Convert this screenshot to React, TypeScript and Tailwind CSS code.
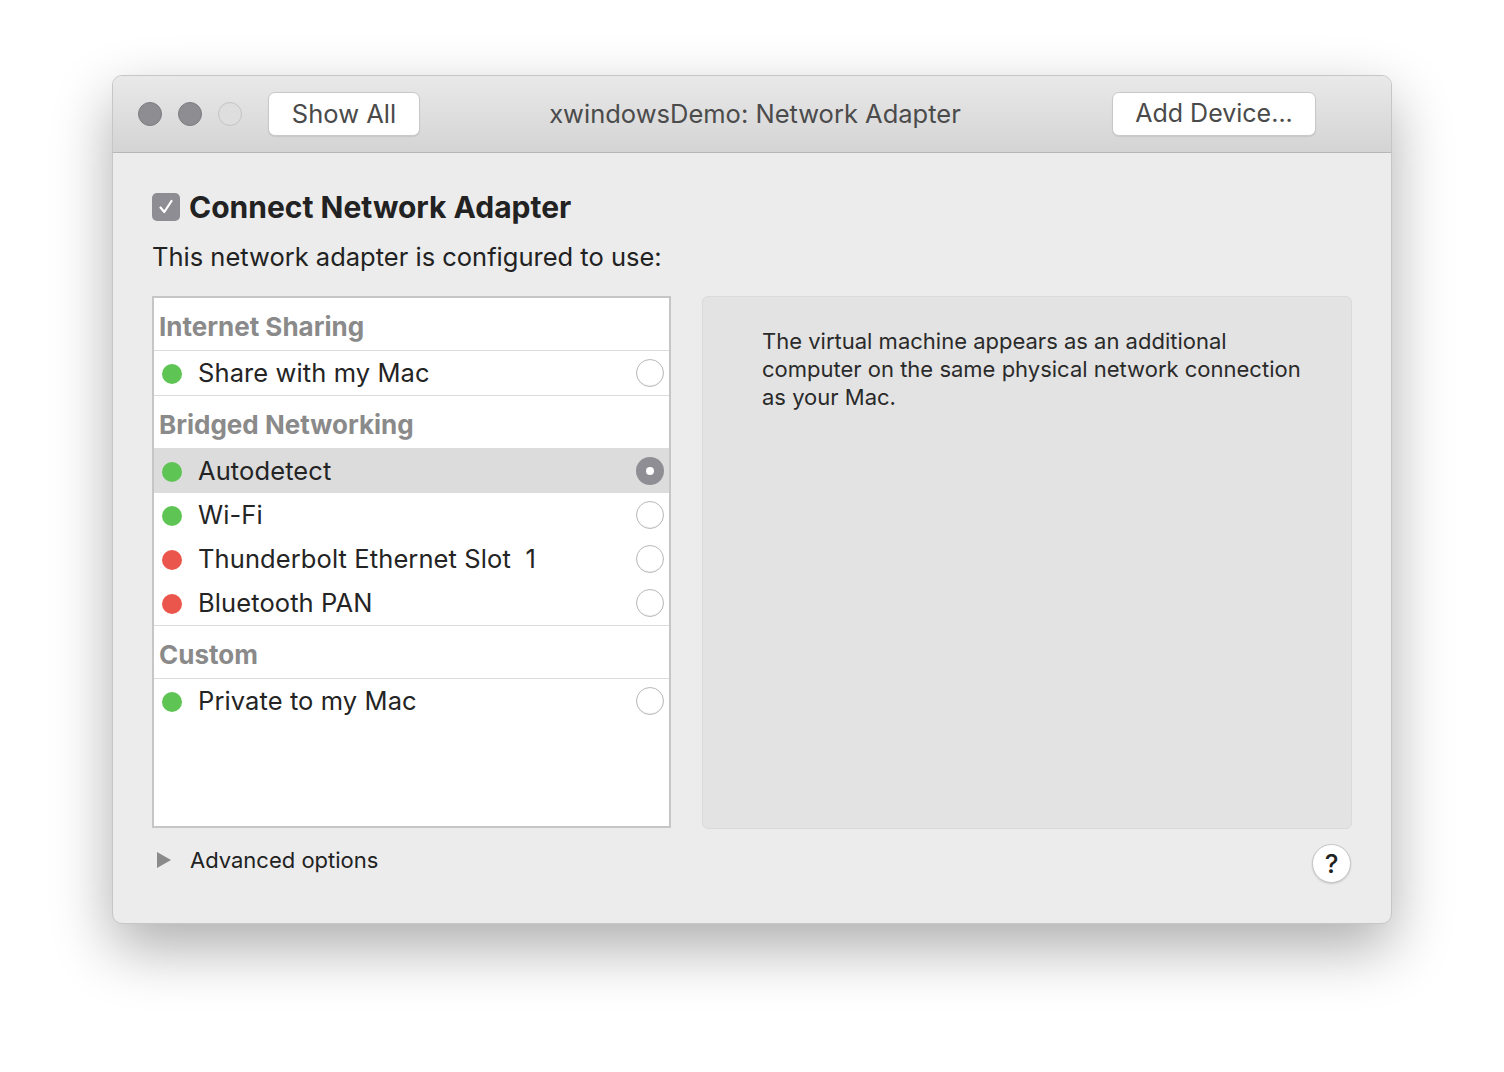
import React from 'react';

type Row = { label: string; status: 'on' | 'off'; selected?: boolean };
type Section = { title: string; rows: Row[] };

const sections: Section[] = [
  { title: 'Internet Sharing', rows: [{ label: 'Share with my Mac', status: 'on' }] },
  {
    title: 'Bridged Networking',
    rows: [
      { label: 'Autodetect', status: 'on', selected: true },
      { label: 'Wi-Fi', status: 'on' },
      { label: 'Thunderbolt Ethernet Slot\u00a0 1', status: 'off' },
      { label: 'Bluetooth PAN', status: 'off' },
    ],
  },
  { title: 'Custom', rows: [{ label: 'Private to my Mac', status: 'on' }] },
];

const Radio: React.FC<{ checked?: boolean }> = ({ checked }) =>
  checked ? (
    <div className="w-[28px] h-[28px] rounded-full bg-[#8f8e94] flex items-center justify-center">
      <div className="w-[8px] h-[8px] rounded-full bg-white" />
    </div>
  ) : (
    <div className="w-[28px] h-[28px] rounded-full bg-white border border-[#b8b8b8] shadow-[inset_0_-1px_1px_rgba(0,0,0,0.06)]" />
  );

const ListRow: React.FC<{ row: Row }> = ({ row }) => (
  <div className={`h-[44px] flex items-center pl-[8px] pr-[5px] ${row.selected ? 'bg-[#dcdcdc]' : ''}`}>
    <div className={`w-[20px] h-[20px] rounded-full mt-[2px] ${row.status === 'on' ? 'bg-[#5ec453]' : 'bg-[#ea564c]'}`} />
    <span className="ml-[16px] text-[25.5px] text-[#242424] flex-1 leading-none tracking-[0.1px]">{row.label}</span>
    <Radio checked={row.selected} />
  </div>
);

export default function App() {
  return (
    <div className="w-[1504px] h-[1072px] bg-white pl-[112px] pt-[75px]" style={{ fontFamily: 'Inter, "Noto Sans", sans-serif' }}>
      <div className="w-[1280px] h-[849px] rounded-[10px] border border-[#c6c6c6] overflow-hidden bg-[#ececec] flex flex-col shadow-[0_24px_60px_rgba(0,0,0,0.32)]">
        {/* Title bar */}
        <div className="h-[77px] shrink-0 bg-gradient-to-b from-[#e9e9e9] to-[#d4d4d4] border-b border-[#b6b6b6] flex items-center pl-[25px] pr-[75px]">
          <div className="flex gap-[16px]">
            <div className="w-[24px] h-[24px] rounded-full bg-[#8e8d92] border border-[#7d7c81]" />
            <div className="w-[24px] h-[24px] rounded-full bg-[#8e8d92] border border-[#7d7c81]" />
            <div className="w-[24px] h-[24px] rounded-full bg-[#dedede] border border-[#c4c4c4]" />
          </div>
          <button className="ml-[26px] w-[152px] h-[44px] rounded-[7px] bg-white border border-[#c8c8c8] shadow-[0_1px_1px_rgba(0,0,0,0.08)] text-[25.5px] text-[#4a4a4a]">
            Show All
          </button>
          <div className="flex-1 text-center text-[25.5px] text-[#4b4b4b] pr-[22px]">xwindowsDemo: Network Adapter</div>
          <button className="w-[204px] h-[44px] rounded-[7px] bg-white border border-[#c8c8c8] shadow-[0_1px_1px_rgba(0,0,0,0.08)] text-[25px] text-[#4a4a4a]">
            Add Device...
          </button>
        </div>

        {/* Content */}
        <div className="flex-1 px-[39px] pt-[39px]">
          <div className="flex items-center h-[30px]">
            <div className="w-[28px] h-[28px] rounded-[5px] bg-[#8e8d93] flex items-center justify-center">
              <svg width="20" height="20" viewBox="0 0 20 20" fill="none">
                <path d="M4.5 10.5l3.8 4.5L15.5 4" stroke="white" strokeWidth="2.2" strokeLinecap="round" strokeLinejoin="round" />
              </svg>
            </div>
            <span className="ml-[9px] text-[30px] font-bold text-[#222]">Connect Network Adapter</span>
          </div>
          <div className="mt-[19px] text-[25.5px] text-[#222] leading-[32px]">This network adapter is configured to use:</div>

          <div className="mt-[23px] flex gap-[31px]">
            <div className="w-[519px] h-[532px] bg-white border-2 border-[#c6c6c6]">
              {sections.map((s, i) => (
                <div key={s.title} className={i > 0 ? 'border-t border-[#dcdcdc]' : ''}>
                  <div className="h-[53px] flex items-center pt-[4px] pl-[5px] border-b border-[#dcdcdc] text-[26px] font-bold text-[#8a8a8a]">
                    {s.title}
                  </div>
                  {s.rows.map((r) => (
                    <ListRow key={r.label} row={r} />
                  ))}
                </div>
              ))}
            </div>
            <div className="w-[650px] h-[533px] bg-[#e3e3e3] border border-[#dadada] rounded-[6px] pl-[59px] pt-[30px] pr-[20px]">
              <p className="text-[22px] leading-[28px] text-[#2a2a2a]">
                The virtual machine appears as an additional
                <br />
                computer on the same physical network connection
                <br />
                as your Mac.
              </p>
            </div>
          </div>

          <div className="mt-[16px] flex items-start justify-between">
            <div className="flex items-center h-[30px] pl-[5px]">
              <svg width="14" height="16" viewBox="0 0 14 16">
                <path d="M0 0L14 8L0 16Z" fill="#8a8a8a" />
              </svg>
              <span className="ml-[19px] text-[22px] text-[#222]">Advanced options</span>
            </div>
            <div className="-mt-[1px] mr-[1px] w-[39px] h-[39px] rounded-full bg-white border border-[#c6c6c6] shadow-[0_1px_2px_rgba(0,0,0,0.15)] flex items-center justify-center text-[26px] font-medium text-[#222]">
              ?
            </div>
          </div>
        </div>
      </div>
    </div>
  );
}
